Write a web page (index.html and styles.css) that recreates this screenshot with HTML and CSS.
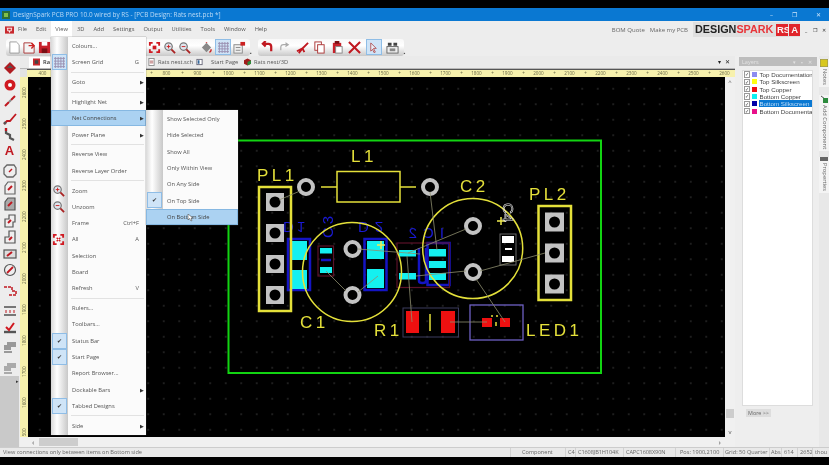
FILE: index.html
```html
<!DOCTYPE html>
<html lang="en">
<head>
<meta charset="utf-8">
<title>DesignSpark PCB PRO</title>
<link rel="stylesheet" href="styles.css">
</head>
<body>
<div class="app">
  <header class="title">
    <svg class="appicon" viewBox="0 0 8 8"><rect width="8" height="8" fill="#2c6e3a"/><rect x="2" y="2" width="4" height="4" fill="#7fc04a"/></svg>
    <span class="title-text">DesignSpark PCB PRO 10.0 wired by RS - [PCB Design: Rats nest.pcb *]</span>
    <span class="winbtns"><span>–</span><span>❐</span><span>✕</span></span>
  </header>

  <nav class="menubar">
    <svg class="docicon" viewBox="0 0 10 8"><rect width="10" height="8" fill="#c8282d"/><path d="M2 2h6M3 2v3h4V2M5 5v2" stroke="#fff" fill="none"/></svg>
    <span class="mi">File</span><span class="mi">Edit</span><span class="mi active">View</span><span class="mi">3D</span><span class="mi">Add</span><span class="mi">Settings</span><span class="mi">Output</span><span class="mi">Utilities</span><span class="mi">Tools</span><span class="mi">Window</span><span class="mi">Help</span>
    <span class="menu-links"><span>BOM Quote</span><span>Make my PCB</span></span>
    <span class="logo"><b class="ds">DESIGN</b><b class="sp">SPARK</b><b class="rs">RS</b><b class="rs rs-a">A</b></span>
    <span class="mdibtns"><span>_</span><span>❐</span><span>✕</span></span>
  </nav>

  <div class="toolbar">
    <div class="tgroup tgroup-a">
      <svg class="ti" viewBox="0 0 14 14"><path d="M2 1h7l3 3v9H2z" fill="#fff" stroke="#999"/></svg>
      <svg class="ti" viewBox="0 0 14 14"><path d="M1 2h7l4 3v8H1z" fill="#f4f4f4" stroke="#a33"/><path d="M6 5h6M9 2l3 3-3 3" stroke="#c22" fill="none" stroke-width="1.5"/></svg>
      <svg class="ti" viewBox="0 0 14 14"><path d="M1 1h12v12H1z" fill="#c8202a"/><rect x="4" y="1" width="6" height="4" fill="#fff"/><rect x="4" y="8" width="6" height="5" fill="#7a1015"/></svg>
      <span class="tspace"></span>
      <svg class="ti" viewBox="0 0 14 14"><path d="M1 1h4v2H3v2H1zM9 1h4v4h-2V3H9zM1 9h2v2h2v2H1zM11 9h2v4H9v-2h2z" fill="#d01820"/><rect x="5" y="5" width="4" height="4" fill="#d01820"/></svg>
      <svg class="ti" viewBox="0 0 14 14"><circle cx="6" cy="6" r="4" fill="#dfe6ee" stroke="#777" stroke-width="1.3"/><path d="M9 9l4 4" stroke="#a22" stroke-width="2"/><path d="M4 6h4M6 4v4" stroke="#c22"/></svg>
      <svg class="ti" viewBox="0 0 14 14"><circle cx="6" cy="6" r="4" fill="#dfe6ee" stroke="#777" stroke-width="1.3"/><path d="M9 9l4 4" stroke="#a22" stroke-width="2"/><path d="M4 6h4" stroke="#c22"/></svg>
      <span class="tgap"></span>
      <svg class="ti" viewBox="0 0 14 14"><path d="M2 7l5-5 5 5-5 5z" fill="#888"/><path d="M7 2V1M10 12q2 0 2-3" stroke="#c22" fill="none" stroke-width="1.5"/></svg>
      <span class="tbox"><svg class="grid-ico" viewBox="0 0 12 12"><path d="M0 1.5h12M0 4.5h12M0 7.5h12M0 10.5h12M1.5 0v12M4.5 0v12M7.5 0v12M10.5 0v12" stroke="#9a8fb0"/></svg></span>
      <svg class="ti" viewBox="0 0 14 14"><rect x="1" y="4" width="9" height="9" fill="#eee" stroke="#888"/><path d="M3 7h5M3 10h5" stroke="#888"/><rect x="8" y="1" width="5" height="4" fill="#c22"/></svg>
    </div>
    <span class="tgrip">▪</span>
    <div class="tgroup tgroup-b">
      <svg class="ti" viewBox="0 0 14 14"><path d="M11 11V6q0-3-3-3H3M5 0L2 3l3 3" stroke="#c01820" fill="none" stroke-width="2.4"/></svg>
      <svg class="ti" viewBox="0 0 14 14"><path d="M3 10V7q0-3 3-3h4M8 2l3 2-3 2" stroke="#aaa" fill="none" stroke-width="1.3"/></svg>
      <svg class="ti" viewBox="0 0 14 14"><path d="M1 11l6-3 6-6M3 13l4-5 2 4" stroke="#c01820" fill="none" stroke-width="2"/></svg>
      <svg class="ti" viewBox="0 0 14 14"><rect x="2" y="1" width="7" height="9" fill="#fff" stroke="#a33"/><rect x="5" y="4" width="7" height="9" fill="#fff" stroke="#a33"/></svg>
      <svg class="ti" viewBox="0 0 14 14"><rect x="2" y="2" width="9" height="11" fill="#c8202a"/><rect x="4" y="0" width="5" height="3" fill="#7a1015"/><rect x="5" y="6" width="7" height="7" fill="#fff" stroke="#888"/></svg>
      <svg class="ti" viewBox="0 0 14 14"><path d="M1 1l12 12M13 1L1 13" stroke="#c01820" stroke-width="2.2"/></svg>
      <span class="tbox"><svg class="grid-ico" viewBox="0 0 12 12"><path d="M3 1l6 6H6l2 4-1.500 .5L5 8l-2 2z" fill="#e8eef8" stroke="#a33" stroke-width=".8"/></svg></span>
      <svg class="ti" viewBox="0 0 14 14"><rect x="1" y="6" width="12" height="7" fill="#eee" stroke="#666"/><path d="M2 2h4v3H2zM8 2h4v3H8z" fill="#444"/><path d="M4 8h6v3H4z" fill="#888"/></svg>
    </div>
    <span class="tgrip">▪</span>
  </div>

  <main class="work">
    <aside class="tools">
      <svg class="lt" viewBox="0 0 14 14"><path d="M1 7l6-6 6 6-6 6z" fill="#b01c22"/><path d="M4 7l3-3 3 3" fill="#555"/></svg>
      <svg class="lt" viewBox="0 0 14 14"><circle cx="7" cy="7" r="5.500" fill="#d01820"/><circle cx="7" cy="7" r="2" fill="#fff"/></svg>
      <svg class="lt" viewBox="0 0 14 14"><path d="M2 12l4-4M8 6l4-4" stroke="#c01820" stroke-width="2"/><path d="M6 8l2-2" stroke="#888" stroke-width="2"/></svg>
      <svg class="lt" viewBox="0 0 14 14"><path d="M1 13l3-3h3l6-7" stroke="#c01820" stroke-width="1.800" fill="none"/><circle cx="2" cy="12" r="1.500" fill="#555"/></svg>
      <svg class="lt" viewBox="0 0 14 14"><path d="M3 1v5l4 2v3l4 2" stroke="#555" stroke-width="2.200" fill="none"/><path d="M3 1v3" stroke="#c01820" stroke-width="2.200"/></svg>
      <span class="lt-a">A</span>
      <svg class="lt lt-gap" viewBox="0 0 14 14"><path d="M4 1h7l2 3v6l-3 3H4l-3-3V4z" fill="#eee" stroke="#666" stroke-width="1.300"/><path d="M6 8l3-3" stroke="#c01820" stroke-width="1.500"/></svg>
      <svg class="lt" viewBox="0 0 14 14"><path d="M5 1h7v12H2V5z" fill="#eee" stroke="#666" stroke-width="1.200"/><path d="M5 9l4-4" stroke="#c01820" stroke-width="2"/></svg>
      <svg class="lt" viewBox="0 0 14 14"><path d="M5 1h7v12H2V5z" fill="#aaa" stroke="#555" stroke-width="1.200"/><path d="M5 9l4-4" stroke="#c01820" stroke-width="2"/></svg>
      <svg class="lt" viewBox="0 0 14 14"><path d="M6 1h6v7h-2v5H2V5h4z" fill="#eee" stroke="#555" stroke-width="1.200"/><path d="M5 9l3-3" stroke="#c01820" stroke-width="2"/></svg>
      <svg class="lt" viewBox="0 0 14 14"><path d="M6 1h6v12H2V7h4z" fill="#eee" stroke="#555" stroke-width="1.200"/><path d="M6 10l3-3" stroke="#c01820" stroke-width="2"/></svg>
      <svg class="lt" viewBox="0 0 14 14"><rect x="1" y="3" width="12" height="8" fill="#ddd" stroke="#555" stroke-width="1.200"/><path d="M4 9l5-4" stroke="#c01820" stroke-width="2"/></svg>
      <svg class="lt" viewBox="0 0 14 14"><circle cx="7" cy="7" r="5.500" fill="#eee" stroke="#555" stroke-width="1.200"/><path d="M4 10l6-6" stroke="#c01820" stroke-width="1.800"/></svg>
      <svg class="lt lt-gap" viewBox="0 0 14 14"><path d="M1 3h8v4h4v4H5" stroke="#c01820" stroke-width="1.500" fill="none" stroke-dasharray="3 1"/></svg>
      <svg class="lt lt-gap" viewBox="0 0 14 14"><path d="M1 3h12M1 11h12" stroke="#777" stroke-width="2"/><path d="M3 6v3M7 6v3M11 6v3" stroke="#c01820"/></svg>
      <svg class="lt" viewBox="0 0 14 14"><path d="M1 11h12" stroke="#555" stroke-width="2.400"/><path d="M3 6l3 3 5-7" stroke="#d01820" stroke-width="2" fill="none"/></svg>
      <svg class="lt lt-gap" viewBox="0 0 14 14"><path d="M4 1h9v5H8v3H1V4h3z" fill="#999"/><path d="M1 11h8" stroke="#999" stroke-width="2"/></svg>
      <svg class="lt lt-gap" viewBox="0 0 14 14"><path d="M4 1h9v5H8v3H1V4h3z" fill="#aaa"/><path d="M1 11h8" stroke="#aaa" stroke-width="2"/></svg>
      <span class="lt-grip">▸</span>
    </aside>

    <section class="center">
      <div class="tabs">
        <span class="tab tab-first"><svg class="tabico" viewBox="0 0 8 8"><rect width="8" height="8" fill="#c8282d"/><rect x="2" y="2" width="4" height="4" fill="#444"/></svg>Ra</span>
        <span class="tab tab-sch"><svg class="tabico" viewBox="0 0 8 8"><rect x="1" y="0" width="6" height="8" fill="#fff" stroke="#888"/><path d="M2 3h4M2 5h4" stroke="#a55"/></svg>Rats nest.sch</span>
        <span class="tab tab-start"><svg class="tabico" viewBox="0 0 8 8"><rect x="1" y="1" width="6" height="6" fill="#fff" stroke="#667"/><rect x="2" y="2" width="2" height="4" fill="#369"/></svg>Start Page</span>
        <span class="tab tab-3d"><svg class="tabico" viewBox="0 0 8 8"><path d="M4 0l4 2v4L4 8 0 6V2z" fill="#a01c1c"/><path d="M4 4l4-2v4L4 8z" fill="#2c8a3c"/></svg>Rats nest/3D</span>
        <span class="tabctl"><span>▾</span><span>✕</span></span>
      </div>
      <div class="hruler">
        <span class="corner"></span>
        <div class="rl">
          <span>400</span><span>500</span><span>600</span><span>700</span><span>800</span><span>900</span><span>1000</span><span>1100</span><span>1200</span><span>1300</span><span>1400</span><span>1500</span><span>1600</span><span>1700</span><span>1800</span><span>1900</span><span>2000</span><span>2100</span><span>2200</span><span>2300</span><span>2400</span><span>2500</span><span>2600</span>
        </div>
      </div>
      <div class="canvasrow">
        <div class="vruler">
          <span>2600</span><span>2500</span><span>2400</span><span>2300</span><span>2200</span><span>2100</span><span>2000</span><span>1900</span><span>1800</span><span>1700</span><span>1600</span><span>1500</span>
        </div>
        <div class="canvas">
          <svg class="pcb" viewBox="28 77 697 359" width="697" height="359">
            <rect x="228.500" y="140.500" width="372.500" height="232.500" class="board"/>

            <g class="navy">
              <rect x="288" y="239" width="22" height="51"/>
              <rect x="364.500" y="239" width="22" height="51"/>
              <rect x="427.500" y="243" width="22" height="42"/>
              <path d="M419 248v33q0 2 3.500 2t3.500-2v-33"/>
              <path d="M321 260h10"/>
            </g>
            <rect x="318" y="246" width="15.500" height="30" class="outline-red"/>
            <rect x="397" y="243" width="52.500" height="44.500" class="outline-red"/>
            <g class="mirror">
              <text class="wide" transform="translate(283 222) scale(1 -1)">D1</text>
              <text class="wider" transform="translate(358 222) scale(1 -1)">D2</text>
              <text class="wider" transform="translate(444 238) scale(-1 1)">IC2</text>
              <text class="wide" transform="translate(333 238) rotate(-90)">C3</text>
            </g>

            <g class="cyan">
              <rect x="292" y="241" width="15" height="19"/>
              <rect x="292" y="270" width="15" height="19"/>
              <rect x="367" y="241" width="17" height="18"/>
              <rect x="367" y="269" width="17" height="19"/>
              <rect x="320" y="248" width="12" height="5.500"/>
              <rect x="320" y="267" width="12" height="6"/>
              <rect x="399" y="250" width="17" height="6.500"/>
              <rect x="399" y="273" width="17" height="6.500"/>
              <rect x="429" y="249" width="17" height="7.500"/>
              <rect x="429" y="261" width="17" height="7"/>
              <rect x="429" y="273" width="17" height="7"/>
            </g>

            <g class="red">
              <rect x="406" y="311" width="13" height="22"/>
              <rect x="441" y="311" width="14" height="22"/>
              <rect x="482" y="318" width="10" height="9"/>
              <rect x="500" y="318" width="10" height="9"/>
            </g>
            <rect x="403" y="308" width="55.500" height="29" class="outline-dim"/>
            <rect x="470" y="305" width="53" height="35" class="outline-led"/>

            <g class="silk">
              <rect x="337" y="171.500" width="63" height="30.500"/>
              <path d="M321 187h16M400 187h16"/>
              <rect x="259" y="187" width="32" height="124" class="thick"/>
              <rect x="538.500" y="206" width="32.500" height="94" class="thick"/>
              <circle cx="352" cy="272" r="49.500"/>
              <circle cx="472.700" cy="248.500" r="50"/>
              <path d="M430 314v17M491 316h2M496 316h2M496 322v4"/>
              <path d="M497 221h8M501 217v8M377 245h8M381 241v8" class="cross"/>
            </g>

            <g class="sqpad">
              <rect x="266" y="193" width="18" height="18"/><rect x="266" y="224" width="18" height="18"/><rect x="266" y="255" width="18" height="18"/><rect x="266" y="286" width="18" height="18"/>
              <rect x="545" y="212.500" width="19" height="19"/><rect x="545" y="243.500" width="19" height="19"/><rect x="545" y="274.500" width="19" height="19"/>
            </g>
            <g class="hole">
              <circle cx="275" cy="202" r="5.500"/><circle cx="275" cy="233" r="5.500"/><circle cx="275" cy="264" r="5.500"/><circle cx="275" cy="295" r="5.500"/>
              <circle cx="554.500" cy="222" r="5.500"/><circle cx="554.500" cy="253" r="5.500"/><circle cx="554.500" cy="284" r="5.500"/>
            </g>
            <g class="ring">
              <circle cx="306" cy="187" r="7"/><circle cx="430" cy="187" r="7"/><circle cx="352.500" cy="249" r="7"/><circle cx="352.500" cy="295" r="7"/><circle cx="473" cy="226" r="7"/><circle cx="473" cy="272" r="7"/>
            </g>

            <rect x="500" y="234" width="16" height="31" class="outline-c4"/>
            <g class="white"><rect x="502" y="236" width="12" height="7"/><rect x="505" y="248" width="7" height="2"/><rect x="502" y="256" width="12" height="6"/></g>
            <text class="c4label" transform="translate(503 203) rotate(90)">C4</text>

            <g class="rats">
              <path d="M300 191L279 200M430 192L437 250M466 229L408 253M480 271L545 253M466 271L416 276M476 279L505 322M346 291L326 271M358 292L378 276M358 249L420 254M412 322L407 256M450 322L487 322"/>
            </g>

            <g class="labels">
              <text x="257" y="181">PL1</text>
              <text x="351" y="162">L1</text>
              <text x="460" y="192">C2</text>
              <text x="529" y="200">PL2</text>
              <text x="300" y="328">C1</text>
              <text x="374" y="336">R1</text>
              <text x="526" y="336">LED1</text>
            </g>
          </svg>
        </div>
        <div class="vscroll"><span class="arrow">^</span><span class="thumb-v"></span><span class="arrow">v</span></div>
      </div>
      <div class="hscroll"><span class="arrow">‹</span><span class="thumb-h"></span><span class="arrow arrow-r">›</span></div>
    </section>

    <aside class="panel">
      <div class="panel-head"><span>Layers</span><span class="panel-btns">▾ ▪ ✕</span></div>
      <ul class="layers">
        <li><i class="cb">✓</i><i class="sw sw-doc"></i>Top Documentation</li>
        <li><i class="cb">✓</i><i class="sw sw-silk"></i>Top Silkscreen</li>
        <li><i class="cb">✓</i><i class="sw sw-cop"></i>Top Copper</li>
        <li><i class="cb">✓</i><i class="sw sw-bcop"></i>Bottom Copper</li>
        <li class="sel"><i class="cb">✓</i><i class="sw sw-bsilk"></i><span class="sel-text">Bottom Silkscreen</span></li>
        <li><i class="cb">✓</i><i class="sw sw-bdoc"></i>Bottom Documentatio</li>
      </ul>
      <button class="more">More &gt;&gt;</button>
    </aside>

    <aside class="strip">
      <span class="stripbox"><svg class="stripico" viewBox="0 0 8 8"><rect width="8" height="8" fill="#d8c820" stroke="#886"/></svg><span class="vt">Notes</span></span>
      <span class="stripbox stripbox-2"><svg class="stripico" viewBox="0 0 8 8"><path d="M1 1l4 3" stroke="#555"/><rect x="3" y="3" width="5" height="5" fill="#2c8a3c"/></svg><span class="vt">Add Component</span></span>
      <span class="stripbox stripbox-3"><svg class="stripico" viewBox="0 0 8 4"><rect width="8" height="4" fill="#666"/></svg><span class="vt">Properties</span></span>
    </aside>
  </main>

  <footer class="status">
    <span class="st st-msg">View connections only between items on Bottom side</span>
    <span class="st st-comp">Component</span>
    <span class="st st-c4">C4</span>
    <span class="st st-val">C1608JB1H104K</span>
    <span class="st st-pkg">CAPC1608X90N</span>
    <span class="st st-pos">Pos: 1900,2100</span>
    <span class="st st-grid">Grid: 50 Quarter</span>
    <span class="st st-abs">Abs</span>
    <span class="st st-x">614</span>
    <span class="st st-y">2652</span>
    <span class="st st-u">thou</span>
  </footer>

  <div class="menu menu-view">
    <div class="row"><span class="txt">Colours...</span></div>
    <div class="row"><span class="gut gut-on"><svg class="grid-ico" viewBox="0 0 12 12"><path d="M0 1.500h12M0 4.500h12M0 7.500h12M0 10.500h12M1.500 0v12M4.500 0v12M7.500 0v12M10.500 0v12" stroke="#9a8fb0"/></svg></span><span class="txt">Screen Grid</span><span class="key">G</span></div>
    <hr>
    <div class="row"><span class="txt">Goto</span><span class="sub">▶</span></div>
    <hr>
    <div class="row"><span class="txt">Highlight Net</span><span class="sub">▶</span></div>
    <div class="row hot"><span class="txt">Net Connections</span><span class="sub">▶</span></div>
    <div class="row"><span class="txt">Power Plane</span><span class="sub">▶</span></div>
    <hr>
    <div class="row"><span class="txt">Reverse View</span></div>
    <div class="row"><span class="txt">Reverse Layer Order</span></div>
    <hr>
    <div class="row"><span class="gut"><svg class="ti" viewBox="0 0 14 14"><circle cx="6" cy="6" r="4" fill="#dfe6ee" stroke="#777" stroke-width="1.300"/><path d="M9 9l4 4" stroke="#a22" stroke-width="2"/><path d="M4 6h4M6 4v4" stroke="#c22"/></svg></span><span class="txt">Zoom</span></div>
    <div class="row"><span class="gut"><svg class="ti" viewBox="0 0 14 14"><circle cx="6" cy="6" r="4" fill="#dfe6ee" stroke="#777" stroke-width="1.300"/><path d="M9 9l4 4" stroke="#a22" stroke-width="2"/><path d="M4 6h4" stroke="#c22"/></svg></span><span class="txt">Unzoom</span></div>
    <div class="row"><span class="txt">Frame</span><span class="key">Ctrl+F</span></div>
    <div class="row"><span class="gut"><svg class="ti" viewBox="0 0 14 14"><path d="M1 1h4v2H3v2H1zM9 1h4v4h-2V3H9zM1 9h2v2h2v2H1zM11 9h2v4H9v-2h2z" fill="#d01820"/><path d="M5 5l1.500 1.500M9 5L7.500 6.500M5 9l1.500-1.500M9 9L7.500 7.500" stroke="#d01820" stroke-width="1.500"/></svg></span><span class="txt">All</span><span class="key">A</span></div>
    <div class="row"><span class="txt">Selection</span></div>
    <div class="row"><span class="txt">Board</span></div>
    <div class="row"><span class="txt">Refresh</span><span class="key">V</span></div>
    <hr>
    <div class="row"><span class="txt">Rulers...</span></div>
    <div class="row"><span class="txt">Toolbars...</span></div>
    <div class="row"><span class="gut gut-on">✔</span><span class="txt">Status Bar</span></div>
    <div class="row"><span class="gut gut-on">✔</span><span class="txt">Start Page</span></div>
    <div class="row"><span class="txt">Report Browser...</span></div>
    <div class="row"><span class="txt">Dockable Bars</span><span class="sub">▶</span></div>
    <div class="row"><span class="gut gut-on">✔</span><span class="txt">Tabbed Designs</span></div>
    <hr>
    <div class="row"><span class="txt">Side</span><span class="sub">▶</span></div>
  </div>

  <div class="menu menu-sub">
    <div class="row"><span class="txt">Show Selected Only</span></div>
    <div class="row"><span class="txt">Hide Selected</span></div>
    <div class="row"><span class="txt">Show All</span></div>
    <div class="row"><span class="txt">Only Within View</span></div>
    <div class="row"><span class="txt">On Any Side</span></div>
    <div class="row"><span class="gut gut-on">✔</span><span class="txt">On Top Side</span></div>
    <div class="row hot"><span class="txt">On Bottom Side</span>
      <svg class="cursor" viewBox="0 0 6 8"><path d="M1 0v6l1.500-1.500L4 7l1-.5L4 4h2z" fill="#fff" stroke="#333" stroke-width=".5"/></svg>
    </div>
  </div>
</div>
</body>
</html>
```

FILE: styles.css
```css
* { box-sizing: border-box; }
html, body { margin: 0; padding: 0; background: #000; }
body { width: 829px; height: 465px; overflow: hidden; font-family: "Open Sans", "Liberation Sans", sans-serif; color: #555; }

.app { position: relative; width: 829px; height: 465px; padding: 8px 0; display: flex; flex-direction: column; filter: blur(.45px); font-size: 5.75px; overflow: hidden; }

/* title bar */
.title { height: 13px; flex: none; background: #0a78d2; color: #b9d9f5; display: flex; align-items: center; padding-left: 2px; gap: 3px; font-size: 6.4px; }
.appicon { width: 8px; height: 8px; }
.title-text { flex: 1; }
.winbtns { display: flex; gap: 19px; padding-right: 8px; color: #cfe6fa; font-size: 6px; }

/* menu bar */
.menubar { height: 17px; flex: none; background: #ededed; display: flex; align-items: center; padding-left: 5px; }
.docicon { width: 9px; height: 8px; margin-right: 4px; }
.mi { margin-right: 9px; line-height: 17px; }
.mi.active { background: #fff; margin: 0 5px 0 -4px; padding: 0 4px; }
.menu-links { margin-left: auto; display: flex; gap: 5px; margin-right: 5px; color: #666; font-size: 6px; }
.logo { width: 107px; height: 15px; background: #dfdfdf; display: flex; align-items: center; padding-left: 2px; font-family: "Liberation Sans", sans-serif; font-size: 10.8px; line-height: 15px; }
.ds { color: #222; }
.sp { color: #e8353a; margin-right: 3px; }
.rs { background: #e0252b; color: #f8f8f8; font-size: 9.5px; line-height: 12px; height: 12px; padding: 0 .5px; width: 12px; text-align: center; }
.rs-a { margin-left: 1px; }
.mdibtns { width: 29px; padding: 0 3px 0 5px; display: flex; justify-content: space-between; color: #333; font-size: 5px; }

/* main toolbar */
.toolbar { height: 18px; flex: none; background: #ededed; display: flex; align-items: center; padding-left: 6px; }
.tgroup { height: 17px; display: flex; align-items: center; background: linear-gradient(#f8f8f8, #fff 40%, #c9c9c9); border-radius: 3px; padding: 0 2px; }
.tgroup-a { width: 244px; }
.tgroup-b { width: 146px; margin-left: 6px; gap: 2.5px; padding-left: 3px; }
.ti { width: 13px; height: 13px; flex: none; margin-right: 2px; }
.tspace { width: 95px; }
.tgap { width: 7px; }
.tbox { width: 16px; height: 16px; flex: none; background: #cfe4f7; border: 1px solid #8fbde6; display: flex; align-items: center; justify-content: center; margin-right: 2px; }
.grid-ico { width: 11px; height: 11px; }
.tgrip { font-size: 5px; color: #555; align-self: flex-end; }

/* work area */
.work { flex: 1; min-height: 0; display: grid; grid-template-columns: 20px 715px 84px 10px; grid-template-rows: minmax(0, 1fr); background: #ededed; }

.tools { background: linear-gradient(#ededed, #ededed 320px, #c9c9c9 320px); display: flex; flex-direction: column; align-items: center; padding-top: 5px; gap: 2.500px; width: 19px; overflow: hidden; }
.lt { width: 14px; height: 14px; flex: none; }
.lt-gap { margin-top: 4px; }
.lt-a { height: 14px; font: bold 13px/14px "Liberation Sans", sans-serif; color: #c01820; flex: none; }
.lt-grip { align-self: flex-end; font-size: 5px; color: #333; margin-top: 0; }

.center { display: flex; flex-direction: column; min-width: 0; min-height: 0; }

/* tabs */
.tabs { height: 13px; flex: none; display: flex; align-items: center; background: #eaeaea; padding-left: 2px; border-bottom: 1px solid #b8b8b8; white-space: nowrap; }
.tab { display: flex; align-items: center; gap: 3px; height: 11px; padding: 0 2px; color: #555; flex: none; }
.tab-first { width: 32px; margin-left: 7px; background: #fff; font-weight: 600; color: #333; padding: 0 4px; }
.tab-sch { margin-left: 85px; width: 46px; }
.tab-start { margin-left: 2px; width: 47px; gap: 8px; }
.tab-3d { margin-left: 1px; }
.tabico { width: 7px; height: 8px; flex: none; }
.tabctl { margin-left: auto; display: flex; gap: 4px; padding-right: 5px; color: #222; font-size: 6px; }

/* rulers */
.hruler { height: 8px; flex: none; display: flex; background: #777; }
.corner { width: 8px; flex: none; background: #e2e2e2; }
.rl { flex: 1; background: #f7f1ad; border-top: 1px solid #555; overflow: hidden; display: flex; font-size: 4.600px; line-height: 7px; color: #6a6a4a; margin-left: -1px; }
.rl span { width: 31px; flex: none; text-align: center; position: relative; }
.rl span::after { content: "+"; position: absolute; right: -2px; top: 0; }

.canvasrow { flex: 1; min-height: 0; display: grid; grid-template-columns: 8px 1fr 10px; grid-template-rows: minmax(0, 1fr); }
.vruler { background: #f7f1ad; overflow: hidden; display: flex; flex-direction: column; color: #6a6a4a; font-size: 4.600px; min-height: 0; }
.vruler span { height: 31px; flex: none; display: flex; align-items: center; justify-content: center; writing-mode: vertical-rl; transform: rotate(180deg); line-height: 8px; }
.canvas { background-color: #000; background-image: radial-gradient(circle, #2a2a2a .6px, transparent .9px); background-size: 15.500px 15.500px; background-position: 4px 4px; overflow: hidden; min-height: 0; }
.pcb { display: block; }
.vscroll { background: #f0f0f0; display: flex; flex-direction: column; align-items: center; color: #555; font-size: 6px; min-height: 0; }
.vscroll .arrow { height: 10px; line-height: 10px; }
.thumb-v { width: 8px; height: 9px; background: #cdcdcd; margin-top: auto; margin-bottom: 9px; }
.hscroll { height: 10px; flex: none; background: #f0f0f0; display: flex; align-items: center; color: #555; padding-left: 12px; font-size: 8px; line-height: 8px; }
.thumb-h { width: 39px; height: 8px; background: #cdcdcd; margin-left: 5px; }
.arrow-r { margin-left: auto; margin-right: 14px; }

/* pcb parts */
.board { fill: none; stroke: #12d412; stroke-width: 2; }
.silk, .silk rect, .silk circle, .silk path { fill: none; stroke: #e4e03a; stroke-width: 1.500; }
.silk .thick { stroke-width: 2.500; }
.silk .cross { stroke: #f0ec50; }
.navy { fill: none; stroke: #1414c4; stroke-width: 2.500; }
.mirror text { fill: #1a1ad4; font: 15px "Liberation Sans", sans-serif; }
.mirror .wide { letter-spacing: 3px; }
.mirror .wider { letter-spacing: 6px; }
.cyan { fill: #14f0f0; }
.red { fill: #ee1010; }
.outline-red { fill: none; stroke: #5a1228; stroke-width: 1.200; }
.outline-dim { fill: none; stroke: #3c3c5e; stroke-width: 1; }
.outline-led { fill: none; stroke: #6e60c4; stroke-width: 1.300; }
.outline-c4 { fill: none; stroke: #666; stroke-width: 1; }
.white { fill: #fff; }
.c4label { fill: none; stroke: #eee; stroke-width: .6; font: 15px "Liberation Sans", sans-serif; }
.sqpad { fill: #c3c3c3; }
.hole { fill: #000; }
.ring { fill: #000; stroke: #c3c3c3; stroke-width: 4; }
.rats { fill: none; stroke: #8e8e6e; stroke-width: .8; }
.labels text { fill: #e4e03a; font: 17px "Liberation Sans", sans-serif; letter-spacing: 3.5px; }

/* layers panel */
.panel { display: flex; flex-direction: column; padding: 1px 2px 0 4px; background: #eee; position: relative; min-height: 0; }
.panel-head { height: 9px; flex: none; background: #bdbdbd; color: #e2e2e2; display: flex; justify-content: space-between; align-items: center; padding: 0 3px; font-size: 5.500px; }
.panel-btns { font-size: 4.500px; letter-spacing: 2px; }
.layers { list-style: none; margin: 4px 4px 0 3px; padding: 0 0 0 1px; height: 336px; background: #fff; border: 1px solid #ddd; flex: none; overflow: hidden; font-family: "Liberation Sans", sans-serif; font-size: 6.200px; color: #444; }
.layers li { height: 7.300px; display: flex; align-items: center; white-space: nowrap; line-height: 7px; }
.cb { width: 6px; height: 6.500px; border: 1px solid #999; font-style: normal; font-size: 4.500px; line-height: 5px; text-align: center; margin-right: 1.500px; flex: none; }
.sw { width: 5px; height: 5px; margin-right: 3px; flex: none; }
.sw-doc { background: #8c8cf0; }
.sw-silk { background: #ffff10; }
.sw-cop { background: #f01010; }
.sw-bcop { background: #10f0f0; }
.sw-bsilk { background: #0000a8; }
.sw-bdoc { background: #e8108a; }
.sel-text { background: #0a78d2; color: #bcdcf8; flex: 1; height: 7px; margin-left: -1px; padding-left: 1px; }
.more { width: 25px; height: 8px; margin: 3px 0 0 7px; padding: 0; background: #ddd; border: none; color: #666; font: 5.400px "Open Sans", sans-serif; line-height: 8px; }

.strip { display: flex; flex-direction: column; padding-top: 3px; background: #e8e8e8; }
.stripbox { display: flex; flex-direction: column; align-items: center; gap: 2px; background: #f4f4f4; width: 10px; font-size: 5.800px; color: #666; padding: 0 0 2px; }
.stripbox-2 { margin-top: 8px; }
.stripbox-3 { margin-top: 6px; }
.stripico { width: 8px; height: 8px; flex: none; }
.stripbox-3 .stripico { height: 4px; }
.vt { writing-mode: vertical-rl; line-height: 9px; }

/* status bar */
.status { height: 10px; flex: none; background: #e9e9e9; display: flex; align-items: center; font-size: 5.600px; color: #666; border-top: 1px solid #ccc; white-space: nowrap; position: relative; }
.st { height: 9px; line-height: 9px; overflow: hidden; padding-left: 2px; border-right: 1px solid #d2d2d2; flex: none; }
.st-msg { width: 511px; padding-left: 3px; }
.st-comp { width: 55px; padding-left: 11px; }
.st-c4 { width: 10px; }
.st-val { width: 48px; letter-spacing: -.1px; }
.st-pkg { width: 52px; letter-spacing: -.1px; }
.st-pos { width: 48px; padding-left: 4px; }
.st-grid { width: 46px; padding-left: 1px; }
.st-abs { width: 12px; padding-left: 1px; }
.st-x { width: 16px; }
.st-y { width: 15px; }
.st-u { width: 16px; border-right: 0; }

/* dropdowns */
.menu { position: absolute; display: flex; flex-direction: column; background: linear-gradient(90deg, #d9d9d9 0, #fff 6px, #c8c8c8 17px, #fbfbfb 17px); box-shadow: 0 0 1px #555; padding: 1px 0; z-index: 5; color: #555; }
.menu-view { left: 51px; top: 37px; width: 95px; height: 398px; }
.menu-sub { left: 146px; top: 110px; width: 92px; height: 115px; }
.row { height: 16.300px; flex: none; display: flex; align-items: center; padding-left: 21px; padding-right: 2px; position: relative; }
.txt { flex: 1; white-space: nowrap; }
.key { margin-right: 5px; }
.sub { font-size: 4.500px; color: #333; }
.gut { position: absolute; left: 1px; top: 0; width: 15px; height: 16px; display: flex; align-items: center; justify-content: center; font-size: 6px; color: #333; }
.gut-on { background: #cfe4f7; border: 1px solid #8fbde6; }
.hot { background: #abd2f2; box-shadow: inset 0 0 0 1px #86b8e2; color: #444; }
.menu hr { border: 0; height: 1px; background: #e2e2e2; margin: 1.250px 2px 1.250px 20px; flex: none; }
.cursor { position: absolute; left: 41px; top: 5px; width: 6px; height: 8px; }
```
